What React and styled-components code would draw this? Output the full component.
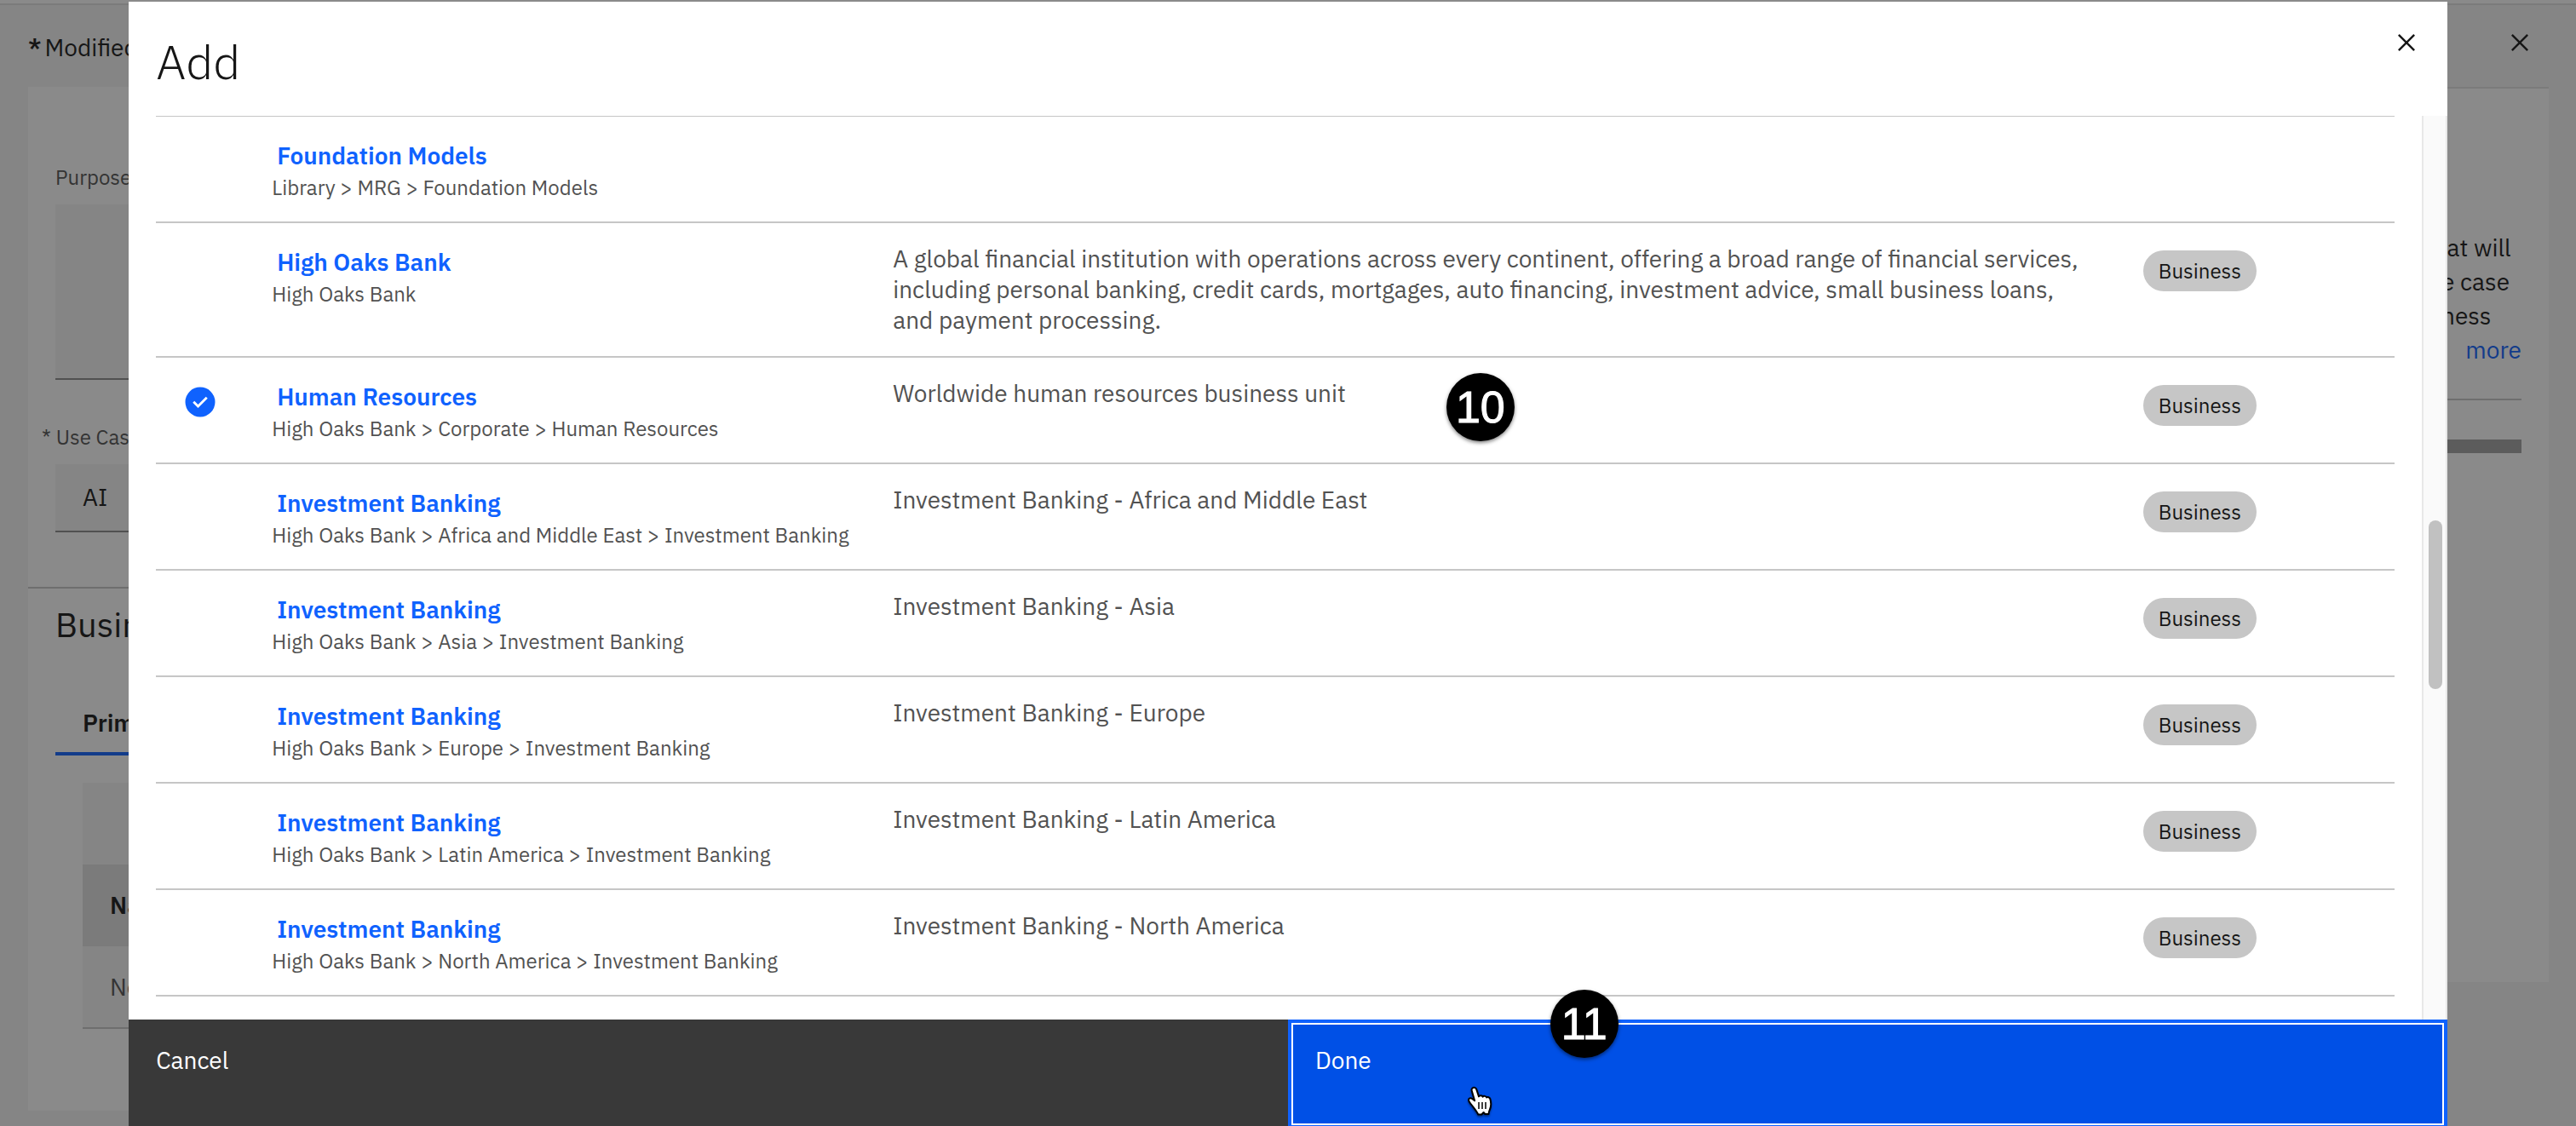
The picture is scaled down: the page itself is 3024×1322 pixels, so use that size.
import React, { useState } from "react";
import styled, { createGlobalStyle } from "styled-components";

const color = {
  ink: "#161616",
  muted: "#525252",
  link: "#0f62fe",
  field: "#f4f4f4",
  subtle: "#e0e0e0",
  line: "#c6c6c6",
  strong: "#8d8d8d",
};

const GlobalStyle = createGlobalStyle`
  *, *::before, *::after { box-sizing: border-box; }
  html, body, #root { height: 100%; }
  body {
    margin: 0;
    overflow: hidden;
    background: ${color.field};
    color: ${color.ink};
    font-family: "IBM Plex Sans", "Open Sans", sans-serif;
    font-size: 28px;
    line-height: 36px;
  }
  button, input, textarea { font: inherit; color: inherit; }
  h1, h2, h3, p, ul { margin: 0; padding: 0; font: inherit; }
`;

/* ---------- page behind the dialog ---------- */

const Page = styled.div`
  display: flex;
  flex-direction: column;
  height: 100vh;
  overflow: hidden;
`;

const TopStrip = styled.div`
  flex: none;
  height: 6px;
  background: #fff;
  border-bottom: 2px solid ${color.subtle};
`;

const PageHeader = styled.header`
  flex: none;
  display: flex;
  align-items: center;
  justify-content: space-between;
  height: 96px;
  padding: 0 46px 8px 33px;
`;

const PageTitle = styled.h1`
  display: flex;
  gap: 4px;
  padding-top: 12px;
  b { font-weight: 600; }
`;

const IconButton = styled.button`
  display: flex;
  padding: 0;
  border: 0;
  background: none;
  cursor: pointer;
  svg { width: 40px; height: 40px; fill: ${color.ink}; }
`;

const Columns = styled.div`
  flex: 1;
  display: flex;
  align-items: flex-start;
  justify-content: space-between;
  padding: 0 32px 0 33px;
`;

const FormPanel = styled.section`
  width: 74%;
  height: 1202px;
  background: #fff;
`;

const FormFields = styled.div`
  display: flex;
  flex-direction: column;
  padding: 90px 32px 64px;
  border-bottom: 2px solid ${color.line};
`;

const FieldLabel = styled.label`
  color: ${color.muted};
  font-size: 24px;
  line-height: 32px;
  margin-bottom: 16px;
`;

const RequiredLabel = styled(FieldLabel)`
  display: flex;
  gap: 6px;
  margin-top: 51px;
  margin-left: -16px;
`;

const TextArea = styled.textarea`
  height: 206px;
  padding: 16px 32px;
  border: 0;
  border-bottom: 2px solid ${color.strong};
  background: ${color.field};
  resize: none;
`;

const TextInput = styled.input`
  height: 80px;
  padding: 0 32px 2px;
  border: 0;
  border-bottom: 2px solid ${color.strong};
  background: ${color.field};
`;

const SectionTitle = styled.h2`
  padding: 14px 32px 0;
  font-size: 40px;
  line-height: 56px;
`;

const TabList = styled.div`
  display: flex;
  margin: 41px 32px 0;
`;

const Tab = styled.button`
  height: 85px;
  padding: 12px 32px 0;
  border: 0;
  border-bottom: 4px solid ${color.link};
  background: none;
  font-weight: 600;
`;

const Table = styled.table`
  width: calc(100% - 128px);
  margin: 32px 64px 0;
  border-collapse: collapse;
  text-align: left;
`;

const TableCaption = styled.caption`
  height: 96px;
  background: ${color.field};
`;

const HeadCell = styled.th`
  height: 96px;
  padding: 0 32px;
  background: ${color.subtle};
  font-weight: 600;
`;

const BodyCell = styled.td`
  height: 96px;
  padding: 0 32px;
  background: ${color.field};
  border-bottom: 2px solid ${color.line};
  color: ${color.muted};
`;

const SidePanel = styled.aside`
  display: flex;
  flex-direction: column;
  width: 22%;
  height: 1051px;
  padding: 167px 32px 0;
  border-top: 2px solid ${color.subtle};
  background: #fff;
`;

const Guidance = styled.p`
  align-self: flex-end;
  display: flex;
  flex-direction: column;
  width: 94px;
  height: 197px;
  line-height: 40px;
`;

const MoreLink = styled.a`
  align-self: flex-end;
  color: ${color.link};
  text-decoration: none;
`;

const SideRule = styled.hr`
  width: 100%;
  margin: 0 0 46px;
  border: 0;
  border-top: 2px solid ${color.line};
`;

const ProgressTrack = styled.div`
  flex: none;
  height: 16px;
  background: #a2a2a2;
`;

/* ---------- dialog ---------- */

const Overlay = styled.div`
  position: fixed;
  inset: 0;
  display: flex;
  justify-content: center;
  padding-top: 2px;
  background: rgba(22, 22, 22, 0.5);
`;

const Dialog = styled.div`
  display: flex;
  flex-direction: column;
  width: 90%;
  background: #fff;
`;

const DialogHeader = styled.header`
  flex: none;
  display: flex;
  align-items: flex-start;
  justify-content: space-between;
  height: 134px;
  padding: 28px 28px 0 32px;
`;

const DialogTitle = styled.h2`
  padding-top: 6px;
  font-size: 56px;
  font-weight: 300;
  line-height: 72px;
`;

const DialogBody = styled.div`
  flex: 1;
  display: flex;
  justify-content: space-between;
  min-height: 0;
`;

const List = styled.ul`
  flex: 1;
  margin: 0 32px;
  border-top: 1px solid ${color.line};
  list-style: none;
  overflow: hidden;
`;

const Row = styled.li`
  display: grid;
  grid-template-columns: 136px 729px 1fr 295px;
  align-items: start;
  padding: 24px 0;
  border-bottom: 2px solid ${color.line};
`;

const Selector = styled.label`
  display: grid;
  width: 40px;
  height: 40px;
  margin: 8px 0 0 32px;
  cursor: pointer;
  > * { grid-area: 1 / 1; width: 40px; height: 40px; margin: 0; }
  input { opacity: 0; }
  svg { fill: ${color.link}; }
`;

const NameCell = styled.div`
  display: flex;
  flex-direction: column;
  gap: 3px;
`;

const NameLink = styled.a`
  padding: 4px 0 0 6px;
  color: ${color.link};
  font-weight: 600;
  text-decoration: none;
`;

const Path = styled.span`
  color: ${color.muted};
  font-size: 24px;
  line-height: 32px;
`;

const Description = styled.p`
  padding-right: 64px;
  color: ${color.muted};
`;

const Tag = styled.span`
  justify-self: start;
  margin-top: 8px;
  padding: 0 18px;
  border-radius: 24px;
  background: ${color.line};
  font-size: 24px;
  line-height: 48px;
`;

const ScrollTrack = styled.div`
  flex: none;
  width: 30px;
  padding: 475px 4px 0 6px;
  border: solid #e8e8e8;
  border-width: 0 2px;
  background: #fafafa;
`;

const ScrollThumb = styled.div`
  height: 198px;
  border-radius: 8px;
  background: #c1c1c1;
`;

const DialogFooter = styled.footer`
  flex: none;
  display: grid;
  grid-template-columns: 1fr 1fr;
  height: 125px;
`;

const FooterButton = styled.button`
  display: flex;
  padding: 30px 32px;
  border: 0;
  background: #393939;
  color: #fff;
  cursor: pointer;
`;

const PrimaryButton = styled(FooterButton)`
  padding: 26px 28px;
  border: solid ${color.link};
  border-width: 4px 4px 1px;
  background: #0050e6;
  box-shadow: inset 0 0 0 2px #fff;
`;

/* ---------- callouts and pointer ---------- */

const Callout = styled.span`
  position: absolute;
  left: ${(p) => p.$x};
  top: ${(p) => p.$y}px;
  width: 80px;
  height: 80px;
  border-radius: 50%;
  background: #000;
  box-shadow: 0 2px 4px rgba(0, 0, 0, 0.5);
  color: #fff;
  font-family: "Liberation Sans", Arial, sans-serif;
  font-size: 52px;
  line-height: 80px;
  text-align: center;
  -webkit-text-stroke: 1px #fff;
`;

const Pointer = styled.svg`
  position: absolute;
  left: 56.9%;
  top: 1274px;
  width: 34px;
  height: 40px;
  filter: drop-shadow(0 2px 1px rgba(0, 0, 0, 0.4));
`;

const CloseIcon = () => (
  <svg viewBox="0 0 32 32" aria-hidden="true">
    <path d="M24 9.4 22.6 8 16 14.6 9.4 8 8 9.4 14.6 16 8 22.6 9.4 24 16 17.4 22.6 24 24 22.6 17.4 16z" />
  </svg>
);

const CheckIcon = () => (
  <svg viewBox="0 0 32 32" aria-hidden="true">
    <path d="M16 2a14 14 0 1 0 14 14A14 14 0 0 0 16 2Zm-2 19.6-5-5L10.6 15l3.4 3.4L21.4 11l1.6 1.6Z" />
  </svg>
);

const BANK = "High Oaks Bank";

const items = [
  { id: "fm", name: "Foundation Models", path: ["Library", "MRG", "Foundation Models"] },
  {
    id: "hob",
    name: BANK,
    path: [BANK],
    text: "A global financial institution with operations across every continent, offering a broad range of financial services, including personal banking, credit cards, mortgages, auto financing, investment advice, small business loans, and payment processing.",
    tag: "Business",
  },
  {
    id: "hr",
    name: "Human Resources",
    path: [BANK, "Corporate", "Human Resources"],
    text: "Worldwide human resources business unit",
    tag: "Business",
  },
  ...["Africa and Middle East", "Asia", "Europe", "Latin America", "North America"].map((region) => ({
    id: region,
    name: "Investment Banking",
    path: [BANK, region, "Investment Banking"],
    text: `Investment Banking - ${region}`,
    tag: "Business",
  })),
];

export default function App() {
  const [selected, setSelected] = useState(["hr"]);
  const toggle = (id) =>
    setSelected((ids) => (ids.includes(id) ? ids.filter((x) => x !== id) : [...ids, id]));

  return (
    <>
      <GlobalStyle />
      <Page>
        <TopStrip />
        <PageHeader>
          <PageTitle>
            <b>*</b>Modified
          </PageTitle>
          <IconButton aria-label="Close page">
            <CloseIcon />
          </IconButton>
        </PageHeader>
        <Columns>
          <FormPanel>
            <FormFields>
              <FieldLabel htmlFor="purpose">Purpose</FieldLabel>
              <TextArea id="purpose" />
              <RequiredLabel htmlFor="use-case">
                <span>*</span>Use Case
              </RequiredLabel>
              <TextInput id="use-case" defaultValue="AI" />
            </FormFields>
            <SectionTitle>Business</SectionTitle>
            <TabList role="tablist">
              <Tab role="tab" aria-selected="true">Primary</Tab>
            </TabList>
            <Table>
              <TableCaption />
              <thead>
                <tr><HeadCell>Name</HeadCell></tr>
              </thead>
              <tbody>
                <tr><BodyCell>No items</BodyCell></tr>
              </tbody>
            </Table>
          </FormPanel>
          <SidePanel>
            <Guidance>
              <span>&nbsp;at will</span>
              <span>e case</span>
              <span>ness</span>
              <MoreLink href="#more">more</MoreLink>
            </Guidance>
            <SideRule />
            <ProgressTrack />
          </SidePanel>
        </Columns>
      </Page>

      <Overlay>
        <Dialog role="dialog" aria-modal="true" aria-labelledby="dialog-title">
          <DialogHeader>
            <DialogTitle id="dialog-title">Add</DialogTitle>
            <IconButton aria-label="Close">
              <CloseIcon />
            </IconButton>
          </DialogHeader>
          <DialogBody>
            <List>
              {items.map((item) => (
                <Row key={item.id}>
                  <Selector>
                    <input
                      type="checkbox"
                      aria-label={item.path.join(" > ")}
                      checked={selected.includes(item.id)}
                      onChange={() => toggle(item.id)}
                    />
                    {selected.includes(item.id) && <CheckIcon />}
                  </Selector>
                  <NameCell>
                    <NameLink href="#item">{item.name}</NameLink>
                    <Path>{item.path.join(" > ")}</Path>
                  </NameCell>
                  <Description>{item.text}</Description>
                  {item.tag && <Tag>{item.tag}</Tag>}
                </Row>
              ))}
            </List>
            <ScrollTrack>
              <ScrollThumb />
            </ScrollTrack>
          </DialogBody>
          <DialogFooter>
            <FooterButton>Cancel</FooterButton>
            <PrimaryButton>Done</PrimaryButton>
          </DialogFooter>
        </Dialog>
        <Callout $x="calc(57.5% - 41px)" $y={438}>10</Callout>
        <Callout $x="calc(61.5% - 40px)" $y={1162}>11</Callout>
        <Pointer viewBox="0 0 34 40" aria-hidden="true">
          <path
            d="M8.500 3c1.800-.6 3.300.5 3.900 2.400l2.600 8c.7-1.500 4-1.400 4.600.4.900-1.500 3.800-1.200 4.500.7 1.100-1 3.600-.4 4.200 1.600 1 3.300 1.500 8.200-.3 12.400-.8 1.800-1.500 3.200-1.500 5.500h-4.200l-1.700-2-2.300 2.500h-4c-2-4.300-5.200-7.800-8-11.500-1.300-1.700-3.200-3.600-3.300-5.600 0-2 2.200-2.600 3.900-1.600l3.200 2.500L6.700 6.500C6.200 5 7 3.500 8.500 3Z"
            fill="#fff"
            stroke="#000"
            strokeWidth="2"
            strokeLinejoin="round"
          />
          <path d="M15 20v8M19 20v8M23 20v8" stroke="#000" strokeWidth="1.500" />
        </Pointer>
      </Overlay>
    </>
  );
}
